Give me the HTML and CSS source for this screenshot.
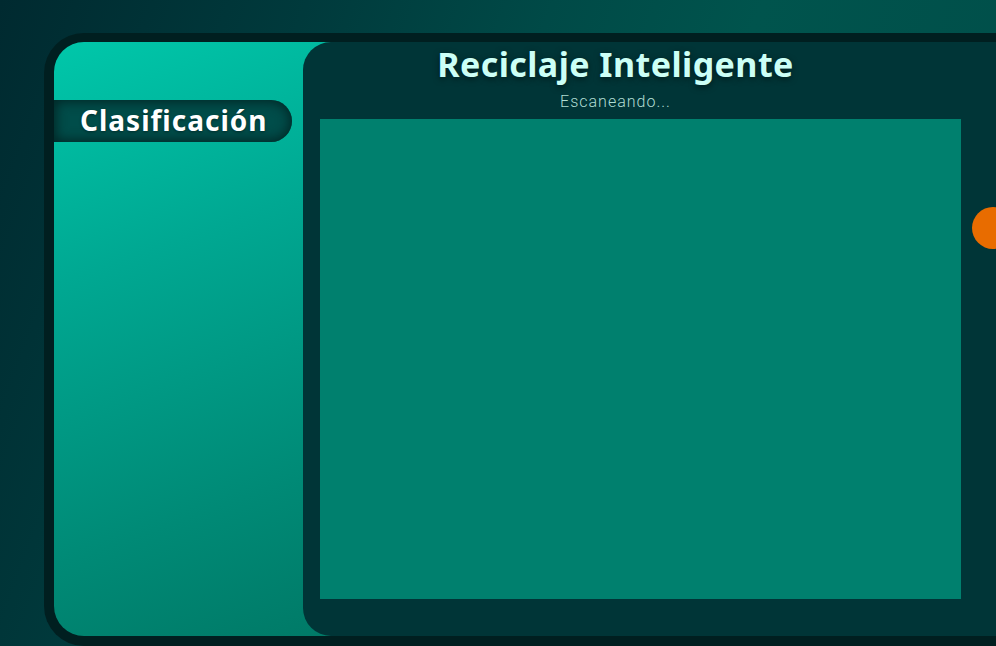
FILE: index.html
```html
<!DOCTYPE html>
<html lang="es">
<head>
<meta charset="utf-8">
<title>Reciclaje Inteligente</title>
<link rel="stylesheet" href="styles.css">
</head>
<body>
<div class="device">
  <div class="device-grid">
    <aside class="side-panel">
      <div class="pill">Clasificación</div>
    </aside>
    <main class="main-panel">
      <div class="content">
        <header class="head">
          <h1 class="title">Reciclaje Inteligente</h1>
          <p class="status">Escaneando...</p>
        </header>
        <div class="screen"></div>
      </div>
      <div class="knob"></div>
    </main>
  </div>
</div>
</body>
</html>
```
FILE: styles.css
```css
html, body {
  margin: 0;
  padding: 0;
}
body {
  width: 996px;
  height: 646px;
  overflow: hidden;
  background: linear-gradient(110deg, #002a30 0%, #003a3c 25%, #004a47 45%, #00544d 62%, #004c48 100%);
  font-family: "Noto Sans", "Open Sans", sans-serif;
}
.device {
  margin: 33px 0 0 44px;
  width: 1000px;
  height: 613px;
  box-sizing: border-box;
  padding: 9px 0 10px 10px;
  background: #001f20;
  border-radius: 40px 0 0 40px;
}
.device-grid {
  display: grid;
  grid-template-columns: 249px 337px 1fr;
  height: 100%;
}
.side-panel {
  grid-column: 1 / 3;
  grid-row: 1;
  background: linear-gradient(160deg, #00c7aa 0%, #00a892 30%, #008a76 65%, #006f5d 100%);
  border-radius: 30px 0 0 30px;
  padding-top: 58px;
}
.pill {
  width: 238px;
  height: 42px;
  box-sizing: border-box;
  border-radius: 0 21px 21px 0;
  background: #004d4a;
  box-shadow: inset 0 0 12px 2px #002726;
  color: #ffffff;
  font-weight: 700;
  font-size: 28px;
  letter-spacing: 1px;
  line-height: 40px;
  padding-left: 26px;
  text-shadow: 0 1px 3px rgba(0,0,0,0.4);
}
.main-panel {
  grid-column: 2 / 4;
  grid-row: 1;
  background: #003537;
  border-radius: 28px 0 0 28px;
  display: flex;
  padding-left: 17px;
}
.content {
  width: 641px;
  display: flex;
  flex-direction: column;
}
.head {
  height: 77px;
  text-align: center;
  padding-right: 50px;
}
.title {
  margin: 0;
  padding-top: 2px;
  font-size: 34px;
  font-weight: 700;
  letter-spacing: 0.45px;
  line-height: 40px;
  color: #ccfff6;
  text-shadow: 0 2px 6px rgba(0,0,0,0.5);
}
.status {
  margin: 8px 0 0;
  font-family: Roboto, "Noto Sans", sans-serif;
  font-size: 16px;
  font-weight: 300;
  letter-spacing: 1px;
  line-height: 20px;
  color: #b0ddd3;
}
.screen {
  height: 480px;
  background: #00806e;
}
.knob {
  flex: none;
  width: 42px;
  height: 42px;
  margin: 165px 0 0 11px;
  border-radius: 50%;
  background: #e86c00;
}
```
